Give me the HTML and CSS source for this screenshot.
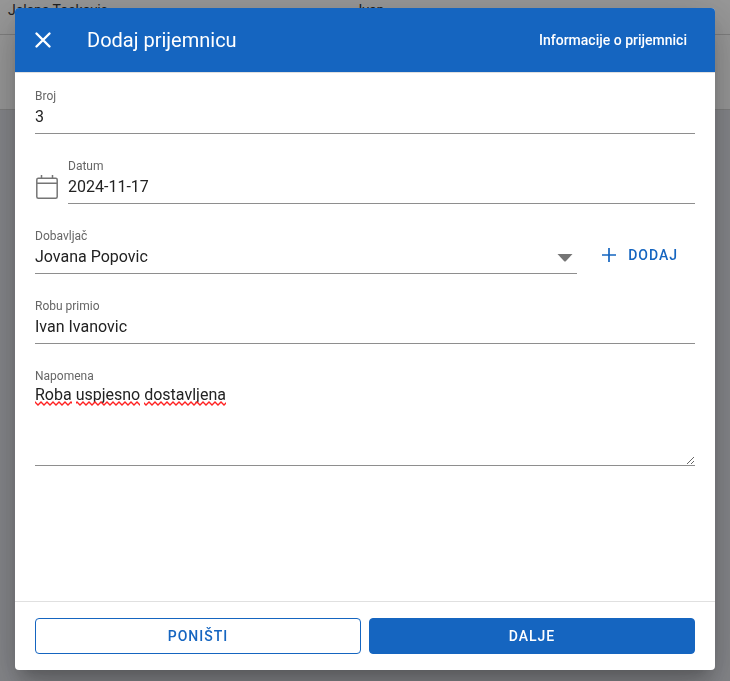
FILE: index.html
```html
<!DOCTYPE html>
<html lang="sr-Latn">
<head>
<meta charset="utf-8">
<meta name="viewport" content="width=device-width, initial-scale=1">
<title>Dodaj prijemnicu</title>
<link rel="stylesheet" href="styles.css">
</head>
<body>
<div class="page">
  <table class="people">
    <tbody>
      <tr><td class="name">Jelena Toskovic</td><td>Ivan</td></tr>
      <tr class="people-foot"><td colspan="2"></td></tr>
    </tbody>
  </table>
</div>
<div class="overlay">
  <form class="dialog" role="dialog" aria-labelledby="title">
    <header class="dialog-head">
      <button type="button" class="close" aria-label="Zatvori">
        <svg viewBox="0 0 24 24" width="24" height="24"><path fill="none" stroke="currentColor" stroke-width="2.400" stroke-linecap="round" d="M5.500 5.500l13 13M18.500 5.500l-13 13"/></svg>
      </button>
      <h1 id="title">Dodaj prijemnicu</h1>
      <span class="step">Informacije o prijemnici</span>
    </header>
    <div class="dialog-body">
      <div class="field">
        <label for="broj">Broj</label>
        <input id="broj" type="text" value="3">
      </div>
      <div class="row date-row">
        <svg class="calendar" viewBox="0 0 24 26" width="24" height="26"><g fill="none" stroke="currentColor"><rect x="1.800" y="4.300" width="20.400" height="20" rx="1.500" stroke-width="1.500"/><path stroke-width="1.500" d="M2 9.200h20M6.500 1v3M17.500 1v3"/></g></svg>
        <div class="field">
          <label for="datum">Datum</label>
          <input id="datum" type="text" value="2024-11-17">
        </div>
      </div>
      <div class="row supplier-row">
        <div class="field select-field">
          <label for="dobavljac">Dobavljač</label>
          <select id="dobavljac"><option>Jovana Popovic</option></select>
          <svg class="caret" viewBox="0 0 16 8" width="16" height="8"><path fill="currentColor" d="M0.500 0h15L8.800 7.200q-.8.800-1.600 0z"/></svg>
        </div>
        <button type="button" class="add">
          <svg viewBox="0 0 14 14" width="14" height="14"><path fill="none" stroke="currentColor" stroke-width="1.700" d="M7 0v14M0 7h14"/></svg>
          DODAJ
        </button>
      </div>
      <div class="field">
        <label for="primio">Robu primio</label>
        <input id="primio" type="text" value="Ivan Ivanovic">
      </div>
      <div class="field note">
        <label for="napomena">Napomena</label>
        <textarea id="napomena" spellcheck="false">Roba uspjesno dostavljena</textarea>
        <svg class="spelling" width="191" height="5" aria-hidden="true">
          <defs><pattern id="wave" width="6" height="5" patternUnits="userSpaceOnUse"><path fill="none" stroke="#f22" stroke-width="1.300" d="M-1.500 2.500L0 1L3 4L6 1L7.500 2.500"/></pattern></defs>
          <path fill="url(#wave)" d="M0 0h37v5H0zM41 0h64v5H41zM109 0h82v5h-82z"/>
        </svg>
      </div>
    </div>
    <footer class="dialog-foot">
      <button type="reset" class="btn outlined">PONIŠTI</button>
      <button type="submit" class="btn filled">DALJE</button>
    </footer>
  </form>
</div>
</body>
</html>
```
FILE: styles.css
```css
* { box-sizing: border-box; }

body {
  margin: 0;
  font: 16px/24px Roboto, sans-serif;
  color: #222;
  background: #dddfe6;
}

svg { display: block; flex: none; }
h1 { margin: 0; }

.page { height: 100vh; overflow: hidden; }

.people {
  width: 100%;
  table-layout: fixed;
  border-spacing: 0;
  background: #fff;
  color: #222;
  font-size: 14px;
}
.people td { height: 35px; padding: 0 8px 14px; border-bottom: 1px solid #d0d0d0; line-height: 20px; }
.people .name { width: 48%; }
.people .people-foot td { height: 75px; }

.overlay {
  position: fixed;
  inset: 0;
  display: flex;
  padding: 8px 15px 11px;
  overflow: auto;
  background: rgba(33, 33, 33, 0.46);
}

.dialog {
  flex: 1;
  display: flex;
  flex-direction: column;
  overflow: hidden;
  border-radius: 4px;
  background: #fff;
  box-shadow: 0 11px 15px -7px rgba(0, 0, 0, 0.2), 0 24px 38px 3px rgba(0, 0, 0, 0.14), 0 9px 46px 8px rgba(0, 0, 0, 0.12);
}

.dialog-head {
  display: flex;
  align-items: center;
  min-height: 65px;
  padding: 0 28px 0 16px;
  border-bottom: 1px solid #e0e0e0;
  color: #fff;
  background: #1565c0;
  background-clip: padding-box;
}
.dialog-head h1 { margin-left: 32px; font-size: 20px; font-weight: 400; }
.close, .add { padding: 0; border: 0; color: inherit; background: none; }
.step { margin-left: auto; font-size: 14px; font-weight: 500; }

.dialog-body {
  flex: 1;
  display: flex;
  flex-direction: column;
  gap: 24px;
  padding: 15px 20px;
}

.row { display: flex; }
.field { position: relative; flex: 1; min-width: 0; display: flex; flex-direction: column; height: 46px; }
.dialog-body > .field { flex: none; }
.date-row { gap: 9px; }
.calendar { margin-top: 16px; color: #757575; }
.supplier-row { gap: 25px; }

label { font-size: 12px; line-height: 16px; color: #666; }

input, select, textarea {
  width: 100%;
  height: 30px;
  margin: 0;
  padding: 0 0 4px;
  border: 0;
  border-bottom: 1px solid #8e8e8e;
  border-radius: 0;
  outline: 0;
  appearance: none;
  font: inherit;
  color: #222;
  background: transparent;
}

.caret { position: absolute; right: 4px; bottom: 12px; color: #757575; pointer-events: none; }

.add {
  display: flex;
  align-items: center;
  gap: 12px;
  margin-right: 17px;
  padding-top: 8px;
  color: #1565c0;
}
.add, .btn { font: 500 14px/20px Roboto, sans-serif; letter-spacing: 1px; }

.dialog-body > .note { height: auto; }
textarea { height: 82px; padding: 0; line-height: 22px; resize: vertical; }
.spelling { position: absolute; left: 0; top: 33px; pointer-events: none; }

.dialog-foot {
  display: flex;
  gap: 8px;
  padding: 16px 20px;
  border-top: 1px solid #e0e0e0;
}
.btn { flex: 1; height: 36px; border: 1px solid #1565c0; border-radius: 4px; }
.outlined { color: #1565c0; background: #fff; }
.filled { color: #fff; background: #1565c0; }
```
